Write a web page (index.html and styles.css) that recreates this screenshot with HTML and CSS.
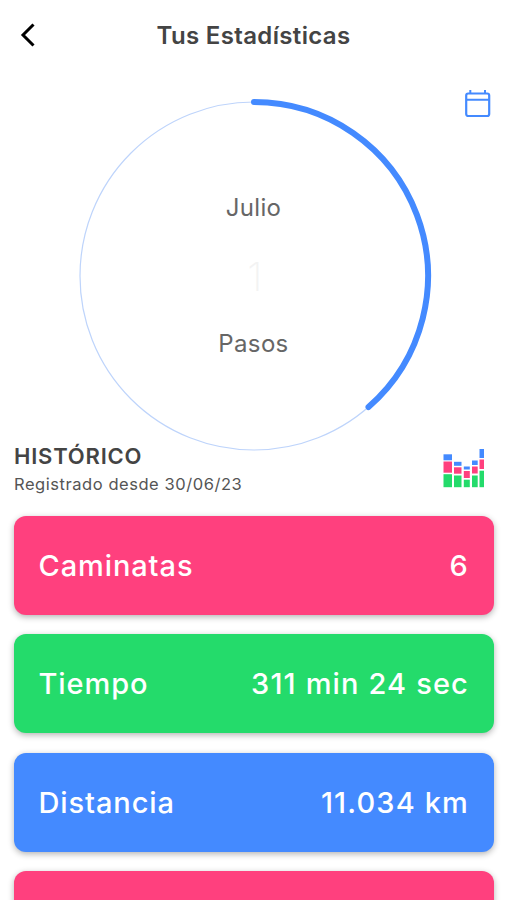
FILE: index.html
```html
<!DOCTYPE html>
<html lang="es">
<head>
    <meta charset="UTF-8">
    <meta name="viewport" content="width=device-width, initial-scale=1.0">
    <title>Tus Estadísticas</title>
    <link rel="stylesheet" href="styles.css">
</head>
<body>
    <header>
        <svg class="back" width="16" height="26" viewBox="0 0 16 26">
            <path d="M13.5 2.5 L3 13 L13.5 23.5" fill="none" stroke="#000" stroke-width="3"/>
        </svg>
        <h1>Tus Estadísticas</h1>
    </header>

    <section class="progress">
        <svg class="ring" width="356" height="356" viewBox="0 0 356 356">
            <circle cx="178" cy="178" r="174" fill="none" stroke="#bed4fb" stroke-width="1.2"/>
            <path d="M178 4 A174 174 0 0 1 292.5 309" fill="none" stroke="#448aff" stroke-width="6" stroke-linecap="round"/>
        </svg>
        <div class="ring-text">
            <span>Julio</span>
            <span class="steps">1</span>
            <span>Pasos</span>
        </div>
        <svg class="calendar" width="28" height="30" viewBox="0 0 28 30">
            <rect x="2.2" y="4.5" width="23" height="22.5" rx="2" fill="none" stroke="#448aff" stroke-width="2.2"/>
            <path d="M2 10.8 H25 M6.3 1 V4.5 M21 1 V4.5" fill="none" stroke="#448aff" stroke-width="2"/>
        </svg>
    </section>

    <section class="history">
        <div>
            <h2>HISTÓRICO</h2>
            <p>Registrado desde 30/06/23</p>
        </div>
        <svg class="chart" width="42" height="40" viewBox="0 0 42 40">
            <g fill="#448aff">
                <rect x="0.5" y="5.3" width="8.5" height="6"/>
                <rect x="11" y="12.8" width="7.5" height="4"/>
                <rect x="20.8" y="17.5" width="6" height="3"/>
                <rect x="29" y="11.5" width="5.7" height="4.5"/>
                <rect x="36.5" y="0" width="4.5" height="9"/>
            </g>
            <g fill="#ff407e">
                <rect x="0.5" y="12.5" width="8.5" height="11.2"/>
                <rect x="11" y="18.3" width="7.5" height="6.4"/>
                <rect x="20.8" y="22" width="6" height="7"/>
                <rect x="29" y="17.5" width="5.7" height="7"/>
                <rect x="36.5" y="10.5" width="4.5" height="9.5"/>
            </g>
            <g fill="#24db6b">
                <rect x="0.5" y="25.2" width="8.5" height="13"/>
                <rect x="11" y="26.5" width="7.5" height="11.7"/>
                <rect x="20.8" y="30.7" width="6" height="7.5"/>
                <rect x="29" y="26.5" width="5.7" height="11.7"/>
                <rect x="36.5" y="21.7" width="4.5" height="16.5"/>
            </g>
        </svg>
    </section>

    <main class="cards">
        <div class="card pink"><span>Caminatas</span><span class="value">6</span></div>
        <div class="card green"><span>Tiempo</span><span class="value">311 min 24 sec</span></div>
        <div class="card blue"><span>Distancia</span><span class="value">11.034 km</span></div>
        <div class="card pink"></div>
    </main>
</body>
</html>
```

FILE: styles.css
```css
body {
    font-family: Inter, Roboto, sans-serif;
    background-color: #fff;
    margin: 0;
    height: 900px;
    overflow: hidden;
    color: #444;
    white-space: nowrap;
}
header {
    position: relative;
    height: 72px;
    display: flex;
    align-items: center;
    justify-content: center;
}
.back {
    position: absolute;
    left: 20px;
    top: 22px;
}
h1 {
    margin: 0;
    padding-bottom: 1px;
    font-size: 24px;
    font-weight: 600;
    letter-spacing: 0.35px;
}
.progress {
    position: relative;
    height: 369.5px;
    padding-top: 25.5px;
    box-sizing: border-box;
    display: grid;
    justify-content: center;
    align-content: start;
}
.ring, .ring-text {
    grid-area: 1 / 1;
}
.ring-text {
    display: flex;
    flex-direction: column;
    align-items: center;
    justify-content: center;
    font-size: 24px;
    line-height: 30px;
    letter-spacing: 0.35px;
    color: #666;
}
.steps {
    margin: 32px 0 31px;
    padding-left: 3px;
    height: 43px;
    line-height: 43px;
    font-size: 40px;
    font-weight: 200;
    color: #f3f3f3;
}
.calendar {
    position: absolute;
    left: 464px;
    top: 17px;
}
.history {
    display: flex;
    justify-content: space-between;
    height: 74px;
    padding: 0 22px 0 14px;
}
h2 {
    margin: 0;
    font-size: 22px;
    line-height: 28px;
    font-weight: 600;
    letter-spacing: 0.8px;
}
.history p {
    margin: 3px 0 0;
    font-size: 16.5px;
    line-height: 22px;
    letter-spacing: 0.55px;
    color: #555;
}
.chart {
    margin-top: 7.5px;
}
.cards {
    display: flex;
    flex-direction: column;
    gap: 19.5px;
    padding: 0 13px 0 13.5px;
}
.card {
    display: flex;
    justify-content: space-between;
    align-items: center;
    height: 99px;
    flex-shrink: 0;
    padding: 0 25px;
    box-sizing: border-box;
    border-radius: 12px;
    box-shadow: 0 2px 6px rgba(0, 0, 0, 0.3);
    color: #fff;
    font-size: 29px;
    font-weight: 500;
    letter-spacing: 0.9px;
}
.value {
    letter-spacing: 1.15px;
}
.pink {
    background: #ff407e;
}
.green {
    background: #24db6b;
}
.blue {
    background: #448aff;
}
```
